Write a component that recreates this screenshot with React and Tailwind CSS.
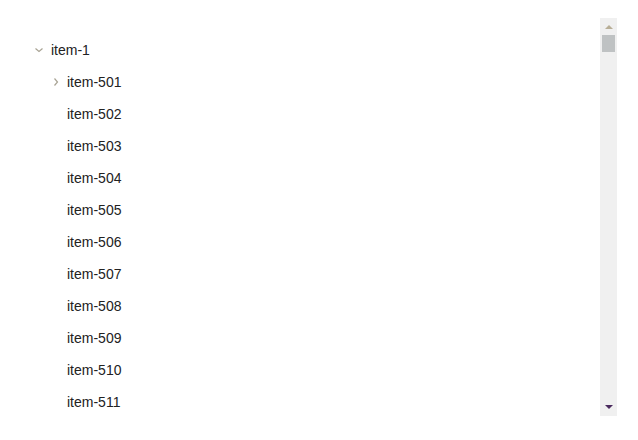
import React from "react";

const Chevron = ({ dir }) => (
  <svg width="10" height="10" viewBox="0 0 10 10" className="shrink-0">
    {dir === "down" ? (
      <path d="M1.5 3.5 L5 6.5 L8.5 3.5" fill="none" stroke="#a8a394" strokeWidth="1.2" />
    ) : (
      <path d="M3.5 1.5 L6.5 5 L3.5 8.5" fill="none" stroke="#a8a394" strokeWidth="1.2" />
    )}
  </svg>
);

export default function App() {
  const children = Array.from({ length: 11 }, (_, i) => `item-${501 + i}`);
  return (
    <div className="w-[638px] h-[440px] bg-white pt-[18px] pl-[18px]" style={{ fontFamily: '"Liberation Sans", Arial, sans-serif' }}>
      <div className="w-[599px] h-[398px] flex">
        <div className="flex-1 overflow-hidden pt-4 text-[14px] text-[#222]">
          <div className="h-8 flex items-center pl-[16px] gap-[7px]">
            <Chevron dir="down" />
            <span>item-1</span>
          </div>
          {children.map((c, i) => (
            <div key={c} className="h-8 flex items-center pl-[33px] gap-[6px]">
              {i === 0 ? <Chevron dir="right" /> : <span className="w-[10px] shrink-0" />}
              <span>{c}</span>
            </div>
          ))}
        </div>
        <div className="w-[17px] h-full bg-[#f0f0f0] flex flex-col items-center">
          <div className="h-[17px] w-full flex items-center justify-center">
            <svg width="8" height="5" viewBox="0 0 8 5"><path d="M0 5 L4 1 L8 5 Z" fill="#b8ae96" /></svg>
          </div>
          <div className="w-[13px] h-[17px] bg-[#bfc2c3]" />
          <div className="flex-1" />
          <div className="h-[17px] w-full flex items-center justify-center">
            <svg width="8" height="5" viewBox="0 0 8 5"><path d="M0 0 L8 0 L4 4 Z" fill="#4a2a5e" /></svg>
          </div>
        </div>
      </div>
    </div>
  );
}
